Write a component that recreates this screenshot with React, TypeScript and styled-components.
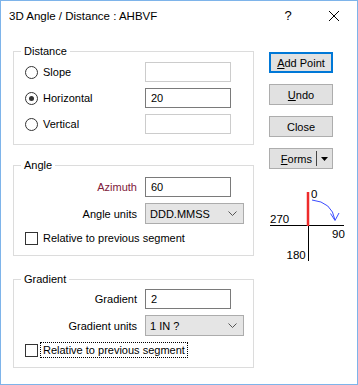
import styled, { createGlobalStyle } from "styled-components";

const GlobalStyle = createGlobalStyle`
  html, body {
    margin: 0;
    padding: 0;
    background: #fff;
  }
  body {
    font-family: "Liberation Sans", Arial, sans-serif;
    font-size: 11px;
    color: #000;
  }
`;

const Window = styled.div`
  width: 358px;
  height: 385px;
  box-sizing: border-box;
  border: 1px solid #7eb4ea;
  background: #fff;
  display: flex;
  flex-direction: column;
`;

const TitleBar = styled.div`
  display: flex;
  align-items: center;
  height: 29px;
  flex: none;
`;

const Title = styled.div`
  flex: 1;
  padding-left: 8px;
  font-size: 11.5px;
`;

const TitleBtn = styled.div`
  width: 46px;
  height: 29px;
  display: flex;
  align-items: center;
  justify-content: center;
  font-size: 13px;
`;

const Body = styled.div`
  display: grid;
  grid-template-columns: 241px 64px;
  column-gap: 15px;
  padding: 21px 0 0 12px;
`;

const Groups = styled.div`
  display: flex;
  flex-direction: column;
`;

const Group = styled.div<{ $h: number; $mt?: number; $pt: number }>`
  position: relative;
  box-sizing: border-box;
  height: ${(p) => p.$h}px;
  margin-top: ${(p) => p.$mt ?? 0}px;
  border: 1px solid #dcdcdc;
  padding: ${(p) => p.$pt}px 0 0 11px;
`;

const Legend = styled.span`
  position: absolute;
  top: -7px;
  left: 7px;
  padding: 0 3px;
  background: #fff;
  line-height: 13px;
`;

const Form = styled.div`
  display: grid;
  grid-template-columns: 120px auto;
  row-gap: 6px;
  align-items: center;
  justify-items: start;
`;

const RadioLabel = styled.label`
  display: flex;
  align-items: center;
  gap: 5px;
`;

const RadioDot = styled.span<{ $on?: boolean }>`
  box-sizing: border-box;
  width: 13px;
  height: 13px;
  border-radius: 50%;
  border: 1px solid #333;
  display: flex;
  align-items: center;
  justify-content: center;
  &::after {
    content: "";
    display: ${(p) => (p.$on ? "block" : "none")};
    width: 5px;
    height: 5px;
    border-radius: 50%;
    background: #333;
  }
`;

const FieldLabel = styled.span<{ $color?: string }>`
  justify-self: stretch;
  text-align: right;
  padding-right: 8px;
  color: ${(p) => p.$color ?? "#000"};
`;

const TextBox = styled.div<{ $off?: boolean }>`
  box-sizing: border-box;
  width: 86px;
  height: 20px;
  border: 1px solid ${(p) => (p.$off ? "#cccccc" : "#7a7a7a")};
  padding-left: 5px;
  line-height: 18px;
`;

const Select = styled.div`
  box-sizing: border-box;
  width: 99px;
  height: 21px;
  border: 1px solid #acacac;
  background: #e5e5e5;
  padding: 0 6px 0 4px;
  display: flex;
  align-items: center;
  justify-content: space-between;
`;

const CheckRow = styled.div`
  grid-column: 1 / -1;
  display: flex;
  align-items: center;
  gap: 2px;
`;

const CheckBox = styled.span`
  box-sizing: border-box;
  width: 13px;
  height: 13px;
  border: 1px solid #333;
  background: #fff;
`;

const CheckText = styled.span<{ $focus?: boolean }>`
  border: 1px ${(p) => (p.$focus ? "dotted #000" : "solid transparent")};
  padding: 0 2px;
  line-height: 14px;
`;

const Side = styled.div`
  display: flex;
  flex-direction: column;
  gap: 11px;
  padding-top: 1px;
`;

const Button = styled.div<{ $primary?: boolean }>`
  box-sizing: border-box;
  height: 21px;
  background: #e1e1e1;
  border: ${(p) => (p.$primary ? "2px solid #0078d7" : "1px solid #adadad")};
  display: flex;
  align-items: center;
  justify-content: center;
`;

const SplitButton = styled(Button)`
  justify-content: flex-end;
  padding-right: 4px;
  gap: 4px;
`;

const Divider = styled.span`
  width: 1px;
  height: 15px;
  background: #444;
`;

const Compass = styled.svg`
  margin: 4px 0 0 -7px;
  overflow: visible;
`;

const Chevron = () => (
  <svg width="9" height="5" viewBox="0 0 9 5">
    <polyline points="0.5,0.5 4.5,4.5 8.5,0.5" fill="none" stroke="#555" strokeWidth="1" />
  </svg>
);

export default function App() {
  return (
    <>
      <GlobalStyle />
      <Window>
        <TitleBar>
          <Title>3D Angle / Distance : AHBVF</Title>
          <TitleBtn>?</TitleBtn>
          <TitleBtn>
            <svg width="10" height="10" viewBox="0 0 10 10">
              <path d="M0 0L10 10M10 0L0 10" stroke="#000" strokeWidth="1" />
            </svg>
          </TitleBtn>
        </TitleBar>
        <Body>
          <Groups>
            <Group $h={94} $pt={10}>
              <Legend>Distance</Legend>
              <Form>
                <RadioLabel>
                  <RadioDot />
                  Slope
                </RadioLabel>
                <TextBox $off />
                <RadioLabel>
                  <RadioDot $on />
                  Horizontal
                </RadioLabel>
                <TextBox>20</TextBox>
                <RadioLabel>
                  <RadioDot />
                  Vertical
                </RadioLabel>
                <TextBox $off />
              </Form>
            </Group>
            <Group $h={91} $mt={20} $pt={11}>
              <Legend>Angle</Legend>
              <Form>
                <FieldLabel $color="#80203a">Azimuth</FieldLabel>
                <TextBox>60</TextBox>
                <FieldLabel>Angle units</FieldLabel>
                <Select>
                  DDD.MMSS
                  <Chevron />
                </Select>
                <CheckRow>
                  <CheckBox />
                  <CheckText>Relative to previous segment</CheckText>
                </CheckRow>
              </Form>
            </Group>
            <Group $h={89} $mt={23} $pt={9}>
              <Legend>Gradient</Legend>
              <Form>
                <FieldLabel>Gradient</FieldLabel>
                <TextBox>2</TextBox>
                <FieldLabel>Gradient units</FieldLabel>
                <Select>
                  1 IN ?
                  <Chevron />
                </Select>
                <CheckRow>
                  <CheckBox />
                  <CheckText $focus>Relative to previous segment</CheckText>
                </CheckRow>
              </Form>
            </Group>
          </Groups>
          <Side>
            <Button $primary>
              <span>
                <u>A</u>dd Point
              </span>
            </Button>
            <Button>
              <span>
                <u>U</u>ndo
              </span>
            </Button>
            <Button>Close</Button>
            <SplitButton>
              <span>
                <u>F</u>orms
              </span>
              <Divider />
              <svg width="7" height="4" viewBox="0 0 7 4">
                <path d="M0 0H7L3.5 4Z" fill="#000" />
              </svg>
            </SplitButton>
            <Compass width="90" height="80" viewBox="262 172 90 80">
              <g fontFamily="Liberation Sans, Arial, sans-serif" fontSize="11.5" fill="#000">
                <text x="311" y="185.5">0</text>
                <text x="270" y="211">270</text>
                <text x="332" y="225.5">90</text>
                <text x="286.5" y="247">180</text>
              </g>
              <line x1="270" y1="213.5" x2="344" y2="213.5" stroke="#000" strokeWidth="1" />
              <line x1="308.5" y1="213" x2="308.5" y2="249" stroke="#000" strokeWidth="1" />
              <line x1="308" y1="180" x2="308" y2="214" stroke="#ee2b2b" strokeWidth="2.5" />
              <path d="M312 188 Q332 190 335 208" fill="none" stroke="#3b4cff" strokeWidth="1" />
              <path d="M330.5 201.5 L335 208.5 L339 201" fill="none" stroke="#3b4cff" strokeWidth="1" />
            </Compass>
          </Side>
        </Body>
      </Window>
    </>
  );
}
